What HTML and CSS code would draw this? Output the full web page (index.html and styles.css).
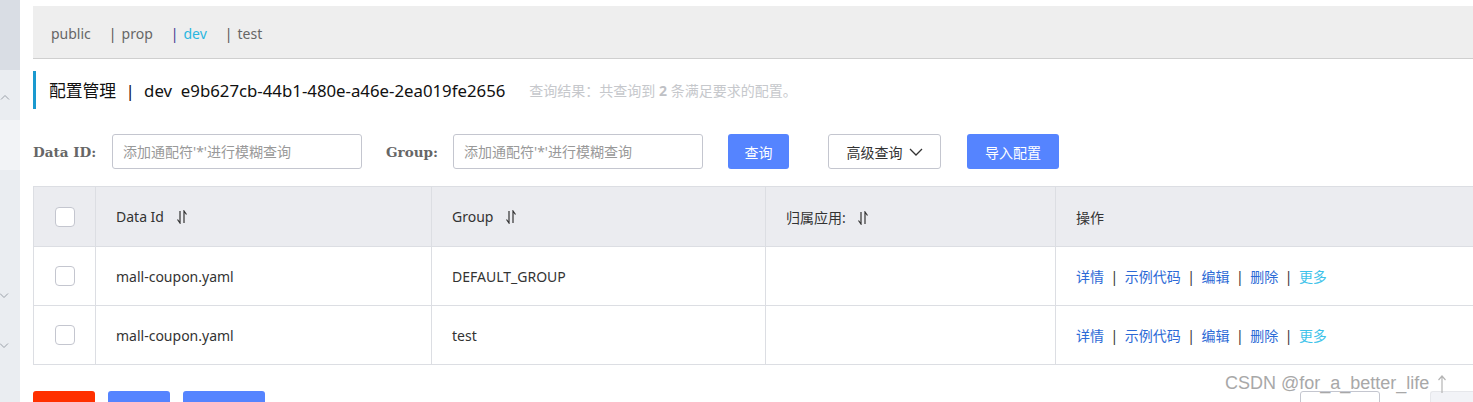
FILE: index.html
```html
<!DOCTYPE html>
<html lang="zh">
<head>
<meta charset="utf-8">
<title>配置管理</title>
<link rel="stylesheet" href="styles.css">
</head>
<body>
<div class="app">
  <aside class="side">
    <div class="side-top"></div>
    <div class="side-item"><svg class="chev" width="10" height="6" viewBox="0 0 10 6"><path d="M1 5.5L5 1.5L9 5.5" fill="none" stroke="#9aa0a8" stroke-width="1"/></svg></div>
    <div class="side-active"></div>
    <div class="side-rest">
      <svg class="chev chev-d1" width="10" height="6" viewBox="0 0 10 6"><path d="M1 0.5L5 4.5L9 0.5" fill="none" stroke="#9aa0a8" stroke-width="1"/></svg>
      <svg class="chev chev-d2" width="10" height="6" viewBox="0 0 10 6"><path d="M1 0.5L5 4.5L9 0.5" fill="none" stroke="#9aa0a8" stroke-width="1"/></svg>
    </div>
  </aside>
  <main class="main">
    <div class="ns-bar">
      <span class="ns">public</span>
      <span class="ns"><span class="sep">|</span>prop</span>
      <span class="ns ns-on"><span class="sep">|</span>dev</span>
      <span class="ns"><span class="sep">|</span>test</span>
    </div>
    <div class="title">
      <span class="title-main">配置管理 <span class="bar">|</span> dev&nbsp; e9b627cb-44b1-480e-a46e-2ea019fe2656</span>
      <span class="title-sub">查询结果：共查询到 <b>2</b> 条满足要求的配置。</span>
    </div>
    <div class="search">
      <label class="lbl">Data ID:</label>
      <div class="input">添加通配符'*'进行模糊查询</div>
      <label class="lbl lbl-g">Group:</label>
      <div class="input">添加通配符'*'进行模糊查询</div>
      <button class="btn btn-primary btn-q">查询</button>
      <button class="btn btn-normal">高级查询 <svg width="14" height="8" viewBox="0 0 14 8"><path d="M1 1L7 7L13 1" fill="none" stroke="#333" stroke-width="1.3"/></svg></button>
      <button class="btn btn-primary btn-imp">导入配置</button>
    </div>
    <div class="table-wrap">
      <table class="tbl">
        <colgroup>
          <col class="c-chk"><col class="c-id"><col class="c-grp"><col class="c-app"><col class="c-op">
        </colgroup>
        <thead>
          <tr>
            <th class="chk-cell"><span class="chk"></span></th>
            <th>Data Id <svg class="sort" width="12" height="14" viewBox="0 0 12 14"><path d="M4 1V13L1.5 9.5M8 13V1L10.5 4.5" fill="none" stroke="#333" stroke-width="1.2"/></svg></th>
            <th>Group <svg class="sort" width="12" height="14" viewBox="0 0 12 14"><path d="M4 1V13L1.5 9.5M8 13V1L10.5 4.5" fill="none" stroke="#333" stroke-width="1.2"/></svg></th>
            <th>归属应用: <svg class="sort" width="12" height="14" viewBox="0 0 12 14"><path d="M4 1V13L1.5 9.5M8 13V1L10.5 4.5" fill="none" stroke="#333" stroke-width="1.2"/></svg></th>
            <th>操作</th>
          </tr>
        </thead>
        <tbody>
          <tr>
            <td class="chk-cell"><span class="chk"></span></td>
            <td>mall-coupon.yaml</td>
            <td>DEFAULT_GROUP</td>
            <td></td>
            <td class="ops"><a>详情</a><span class="osep">|</span><a>示例代码</a><span class="osep">|</span><a>编辑</a><span class="osep">|</span><a>删除</a><span class="osep">|</span><a class="more">更多</a></td>
          </tr>
          <tr>
            <td class="chk-cell"><span class="chk"></span></td>
            <td>mall-coupon.yaml</td>
            <td>test</td>
            <td></td>
            <td class="ops"><a>详情</a><span class="osep">|</span><a>示例代码</a><span class="osep">|</span><a>编辑</a><span class="osep">|</span><a>删除</a><span class="osep">|</span><a class="more">更多</a></td>
          </tr>
        </tbody>
      </table>
    </div>
    <div class="bottom">
      <div class="bottom-left">
        <span class="bb bb-red"></span>
        <span class="bb bb-blue"></span>
        <span class="bb bb-blue bb-wide"></span>
      </div>
      <div class="bottom-right">
        <span class="pg-box"></span>
        <span class="pg-gray"></span>
      </div>
    </div>
    <div class="watermark">CSDN @for_a_better_life <svg width="10" height="20" viewBox="0 0 10 20"><path d="M5 19V2M1.5 6L5 2L8.5 6" fill="none" stroke="#b5b5b5" stroke-width="1.2"/></svg></div>
  </main>
</div>
</body>
</html>
```

FILE: styles.css
```css
* { box-sizing: border-box; }
html, body { margin: 0; padding: 0; background: #fff; }
body {
  font-family: "Noto Sans", "Noto Sans CJK SC", sans-serif;
  font-size: 14px;
  color: #333;
  width: 1473px;
  height: 402px;
  overflow: hidden;
}
.app { display: flex; height: 402px; }
.side {
  width: 20px;
  flex: none;
  display: flex;
  flex-direction: column;
  background: #eaedf1;
}
.side-top { height: 70px; background: #d9dde4; }
.side-item { height: 50px; background: #eaedf1; display: flex; align-items: center; padding-left: 0; }
.side-item .chev { margin-top: 4px; }
.side-active { height: 50px; background: #f2f3f6; }
.side-rest { flex: 1; position: relative; }
.chev { display: block; }
.chev-d1 { position: absolute; left: -1px; top: 123px; }
.chev-d2 { position: absolute; left: -1px; top: 173px; }

.main {
  flex: 1;
  padding: 6px 0 0 13px;
  overflow: hidden;
  position: relative;
}
.ns-bar {
  height: 53px;
  background: #eeeeee;
  border-bottom: 1px solid #cfcfcf;
  display: flex;
  align-items: center;
  padding-left: 18px;
  padding-top: 2px;
  color: #666;
  font-size: 14px;
}
.ns { margin-right: 18px; }
.ns .sep { margin-right: 5px; color: #555; }
.ns-on { color: #2ab7e0; }
.ns-on .sep { color: #3a3a90; }

.title {
  margin-top: 12px;
  height: 38px;
  border-left: 3px solid #1a99cf;
  display: flex;
  align-items: center;
  padding-left: 13px;
}
.title-main { font-size: 16.8px; color: #111; }
.title-main .bar { margin: 0 5px; color: #111; }
.title-sub { margin-left: 24px; font-size: 14px; color: #c6c8cc; }
.title-sub b { color: #bfc1c5; }

.search {
  margin-top: 25px;
  height: 35px;
  display: flex;
  align-items: center;
}
.lbl {
  font-family: "DejaVu Serif", serif;
  font-weight: bold;
  font-size: 13.5px;
  color: #666;
  width: 79px;
}
.lbl-g { margin-left: 24px; width: 67px; }
.input {
  width: 250px;
  height: 35px;
  border: 1px solid #c4c6cf;
  border-radius: 3px;
  padding-left: 10px;
  color: #999;
  font-size: 14px;
  line-height: 33px;
}
.btn {
  height: 35px;
  border-radius: 3px;
  font-family: "Noto Sans", "Noto Sans CJK SC", sans-serif;
  font-size: 14px;
  border: 1px solid transparent;
  padding: 0;
  display: flex;
  align-items: center;
  justify-content: center;
}
.btn-primary { background: #5584ff; color: #fff; }
.btn-q { width: 61px; margin-left: 25px; }
.btn-normal {
  width: 113px;
  margin-left: 39px;
  background: #fff;
  border-color: #c4c6cf;
  color: #333;
  gap: 6px;
}
.btn-imp { width: 92px; margin-left: 26px; }

.table-wrap { margin-top: 17px; width: 1500px; }
.tbl {
  width: 1500px;
  border-collapse: collapse;
  table-layout: fixed;
}
.c-chk { width: 62px; }
.c-id { width: 336px; }
.c-grp { width: 334px; }
.c-app { width: 290px; }
.c-op { width: 478px; }
.tbl th, .tbl td {
  border: 1px solid #dcdee3;
  padding: 0 0 0 20px;
  text-align: left;
  font-weight: normal;
  font-size: 14px;
  color: #333;
  vertical-align: middle;
}
.tbl th { background: #ebecf0; height: 60px; }
.tbl td { height: 59px; }
.tbl th.chk-cell, .tbl td.chk-cell { padding: 0; text-align: center; }
.chk {
  display: inline-block;
  width: 20px;
  height: 20px;
  border: 1px solid #c4c6cf;
  border-radius: 4px;
  background: #fff;
  vertical-align: middle;
  margin-top: -2px;
}
.sort { vertical-align: -2px; margin-left: 8px; }
.ops a { color: #2c6ad6; }
.ops a.more { color: #3ec3ea; }
.osep { margin: 0 6.5px; color: #333; }

.bottom {
  margin-top: 26px;
  display: flex;
  justify-content: space-between;
  width: 1440px;
}
.bottom-left { display: flex; gap: 13px; }
.bb { display: block; height: 28px; width: 62px; border-radius: 3px; }
.bb-red { background: #ff3000; }
.bb-blue { background: #5584ff; }
.bb-wide { width: 82px; }
.bottom-right { display: flex; }
.pg-box {
  display: block;
  width: 80px;
  height: 28px;
  border: 1px solid #c4c6cf;
  border-radius: 3px;
  margin-right: 50px;
}
.pg-gray {
  display: block;
  width: 43px;
  height: 28px;
  background: #f2f3f7;
  border: 1px solid #e6e7eb;
  border-right: none;
  border-radius: 3px 0 0 3px;
}
.watermark {
  position: absolute;
  left: 1205px;
  top: 373px;
  font-family: "Liberation Sans", sans-serif;
  font-size: 18px;
  color: #a8a8a8;
  display: flex;
  align-items: center;
  gap: 8px;
  white-space: nowrap;
}
```
